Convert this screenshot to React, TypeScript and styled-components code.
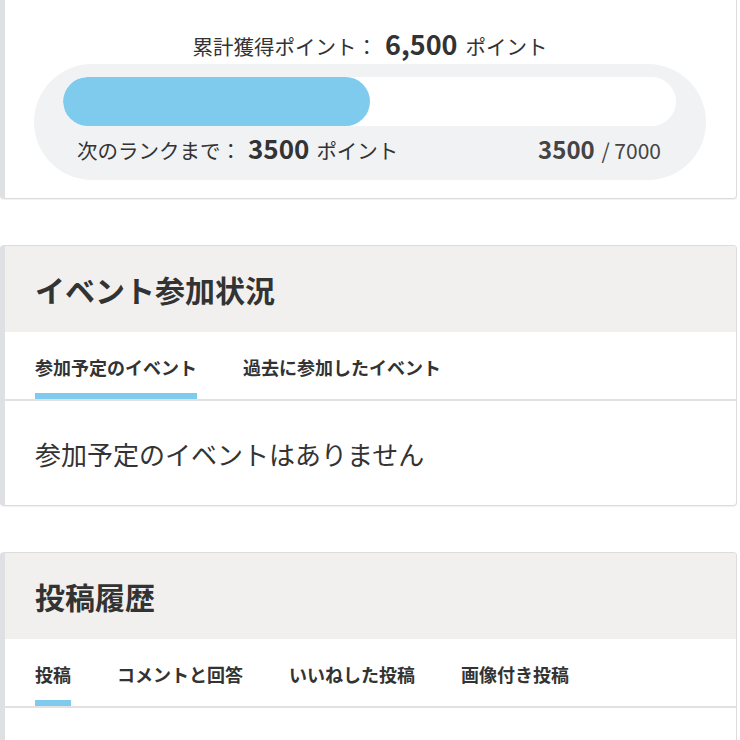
import React from "react";
import styled, { createGlobalStyle } from "styled-components";

const Global = createGlobalStyle`
  html, body { margin: 0; padding: 0; background: #ffffff; }
  body {
    font-family: "Noto Sans CJK JP", "Noto Sans", sans-serif;
    color: #333333;
    overflow: hidden;
  }
`;

const Page = styled.div`
  display: flex;
  flex-direction: column;
  gap: 46px;
  margin-top: -10px;
  width: 740px;
`;

const Card = styled.section`
  background: #ffffff;
  border: 1px solid #dcdcdc;
  border-left: 5px solid #dfe0e3;
  border-radius: 4px;
  margin-right: 3px;
  box-shadow: 0 1px 1px rgba(0, 0, 0, 0.06);
  overflow: hidden;
`;

const PointsBody = styled.div`
  display: flex;
  flex-direction: column;
  align-items: stretch;
  padding: 38px 30px 18px 29px;
`;

const Summary = styled.div`
  display: flex;
  justify-content: center;
  align-items: baseline;
  gap: 6px;
  height: 30px;
  line-height: 30px;
  font-size: 20.5px;
  margin-bottom: 5px;
`;

const Strong = styled.span<{ $size: number }>`
  font-weight: 700;
  font-size: ${(p) => p.$size}px;
  margin: 0 2px;
`;

const Pill = styled.div`
  background: #f1f2f4;
  border-radius: 58px;
  padding: 13px 30px 10px 29px;
  display: flex;
  flex-direction: column;
`;

const Track = styled.div`
  height: 49px;
  border-radius: 25px;
  background: #ffffff;
  overflow: hidden;
`;

const Fill = styled.div`
  height: 100%;
  background: #7fcbee;
  border-radius: 25px;
`;

const RankRow = styled.div`
  display: flex;
  justify-content: space-between;
  align-items: baseline;
  padding: 0 15px 0 14px;
  height: 44px;
  line-height: 44px;
  font-size: 20.5px;
`;

const RankLeft = styled.div`
  display: flex;
  align-items: baseline;
  gap: 5px;
`;

const Ratio = styled.div`
  font-size: 21px;
  color: #444;
`;

const Header = styled.div`
  background: #f1f0ef;
  height: 86px;
  display: flex;
  align-items: center;
  padding-left: 30px;
`;

const Title = styled.h2`
  margin: 0;
  font-size: 30px;
  font-weight: 700;
  color: #333;
`;

const Tabs = styled.div`
  display: flex;
  gap: 46px;
  padding-left: 30px;
  height: 67px;
  border-bottom: 2px solid #e1e1e1;
`;

const Tab = styled.div<{ $active?: boolean }>`
  position: relative;
  display: flex;
  align-items: center;
  font-size: 18px;
  font-weight: 700;
  color: #333;
  padding-top: 2px;
  &::after {
    content: "";
    position: absolute;
    left: 0;
    right: 0;
    bottom: 0;
    height: 6px;
    background: ${(p) => (p.$active ? "#7fcbee" : "transparent")};
  }
`;

const Empty = styled.div`
  height: 104px;
  display: flex;
  align-items: center;
  padding-left: 30px;
  font-size: 26px;
  color: #333;
`;

const Spacer = styled.div`
  height: 40px;
`;

export default function App() {
  const current = 3500;
  const total = 7000;
  return (
    <>
      <Global />
      <Page>
        <Card>
          <PointsBody>
            <Summary>
              <span>累計獲得ポイント：</span>
              <Strong $size={27}>6,500</Strong>
              <span>ポイント</span>
            </Summary>
            <Pill>
              <Track>
                <Fill style={{ width: `${(current / total) * 100}%` }} />
              </Track>
              <RankRow>
                <RankLeft>
                  <span>次のランクまで：</span>
                  <Strong $size={26}>3500</Strong>
                  <span>ポイント</span>
                </RankLeft>
                <Ratio>
                  <Strong $size={24}>3500</Strong> / 7000
                </Ratio>
              </RankRow>
            </Pill>
          </PointsBody>
        </Card>

        <Card>
          <Header>
            <Title>イベント参加状況</Title>
          </Header>
          <Tabs>
            <Tab $active>参加予定のイベント</Tab>
            <Tab>過去に参加したイベント</Tab>
          </Tabs>
          <Empty>参加予定のイベントはありません</Empty>
        </Card>

        <Card>
          <Header>
            <Title>投稿履歴</Title>
          </Header>
          <Tabs>
            <Tab $active>投稿</Tab>
            <Tab>コメントと回答</Tab>
            <Tab>いいねした投稿</Tab>
            <Tab>画像付き投稿</Tab>
          </Tabs>
          <Spacer />
        </Card>
      </Page>
    </>
  );
}
